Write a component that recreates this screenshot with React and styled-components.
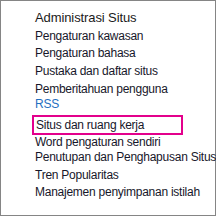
import React from "react";
import styled, { createGlobalStyle } from "styled-components";

const Global = createGlobalStyle`
  html, body { margin: 0; padding: 0; background: #fff; }
`;

const Frame = styled.div`
  box-sizing: border-box;
  width: 216px;
  height: 216px;
  border: 1px solid #858585;
  background: #fff;
  padding: 8px 0 0 34px;
  font-family: "Liberation Sans", Arial, sans-serif;
  color: #1b1b2b;
`;

const Title = styled.div`
  font-size: 13px;
  line-height: 17px;
  letter-spacing: -0.1px;
  color: #1a1a1a;
  margin-bottom: 3px;
`;

const List = styled.ul`
  list-style: none;
  margin: 0;
  padding: 0;
`;

const Item = styled.li`
  font-size: 12px;
  line-height: 15px;
  letter-spacing: -0.25px;
  margin-top: ${(p) => p.$gap || 0}px;
  color: ${(p) => (p.$link ? "#1f6fbf" : "#17172a")};
  white-space: nowrap;
  ${(p) =>
    p.$marked &&
    `
    box-sizing: border-box;
    width: 151px;
    margin-left: -3px;
    padding-left: 2px;
    border: 2px solid #e3008c;
    line-height: 16px;
  `}
`;

const items = [
  { t: "Pengaturan kawasan", gap: 0 },
  { t: "Pengaturan bahasa", gap: 2 },
  { t: "Pustaka dan daftar situs", gap: 3 },
  { t: "Pemberitahuan pengguna", gap: 3 },
  { t: "RSS", gap: 0, link: true },
  { t: "Situs dan ruang kerja", gap: 3, marked: true },
  { t: "Word pengaturan sendiri", gap: 0 },
  { t: "Penutupan dan Penghapusan Situs", gap: 0 },
  { t: "Tren Popularitas", gap: 3 },
  { t: "Manajemen penyimpanan istilah", gap: 2 },
];

export default function App() {
  return (
    <>
      <Global />
      <Frame>
        <Title>Administrasi Situs</Title>
        <List>
          {items.map((it) => (
            <Item key={it.t} $gap={it.gap} $link={it.link} $marked={it.marked}>
              {it.t}
            </Item>
          ))}
        </List>
      </Frame>
    </>
  );
}
